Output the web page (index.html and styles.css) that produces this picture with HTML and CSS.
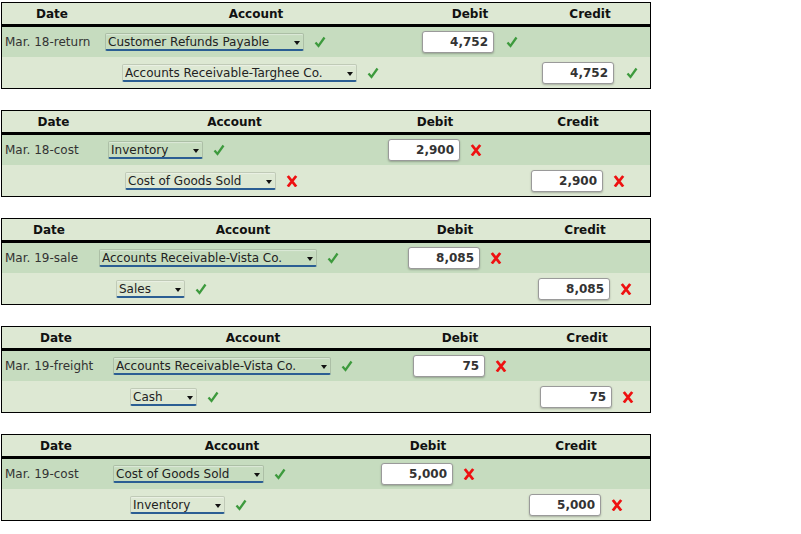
FILE: index.html
```html
<!DOCTYPE html>
<html lang="en">
<head>
  <meta charset="UTF-8">
  <title>Journal entries</title>
  <link rel="stylesheet" href="styles.css">
</head>
<body>

<div class="sheet">

  <!-- Mar. 18 return -->
  <table class="journal j1">
    <colgroup><col class="c-date"><col class="c-acct"><col class="c-dr"><col class="c-cr"></colgroup>
    <thead>
      <tr><th>Date</th><th>Account</th><th>Debit</th><th>Credit</th></tr>
    </thead>
    <tbody>
      <tr class="row-dr">
        <td class="date">Mar. 18-return</td>
        <td class="acct">
          <span class="pick"><select><option>Customer Refunds Payable</option></select></span>
          <svg class="mark ok" viewBox="0 0 12 12"><path d="M1.5 6.5 L4.5 10 L10.5 1.5"/></svg>
        </td>
        <td class="amt">
          <input class="num" type="text" value="4,752">
          <svg class="mark ok" viewBox="0 0 12 12"><path d="M1.5 6.5 L4.5 10 L10.5 1.5"/></svg>
        </td>
        <td class="amt"></td>
      </tr>
      <tr class="row-cr">
        <td class="date"></td>
        <td class="acct indent">
          <span class="pick"><select><option>Accounts Receivable-Targhee Co.</option></select></span>
          <svg class="mark ok" viewBox="0 0 12 12"><path d="M1.5 6.5 L4.5 10 L10.5 1.5"/></svg>
        </td>
        <td class="amt"></td>
        <td class="amt">
          <input class="num" type="text" value="4,752">
          <svg class="mark ok" viewBox="0 0 12 12"><path d="M1.5 6.5 L4.5 10 L10.5 1.5"/></svg>
        </td>
      </tr>
    </tbody>
  </table>

  <!-- Mar. 18 cost -->
  <table class="journal j2">
    <colgroup><col class="c-date"><col class="c-acct"><col class="c-dr"><col class="c-cr"></colgroup>
    <thead>
      <tr><th>Date</th><th>Account</th><th>Debit</th><th>Credit</th></tr>
    </thead>
    <tbody>
      <tr class="row-dr">
        <td class="date">Mar. 18-cost</td>
        <td class="acct">
          <span class="pick"><select><option>Inventory</option></select></span>
          <svg class="mark ok" viewBox="0 0 12 12"><path d="M1.5 6.5 L4.5 10 L10.5 1.5"/></svg>
        </td>
        <td class="amt">
          <input class="num" type="text" value="2,900">
          <svg class="mark bad" viewBox="0 0 12 12"><path d="M1.8 1 L10.2 11.5 M10.2 1 L1.8 11.5"/></svg>
        </td>
        <td class="amt"></td>
      </tr>
      <tr class="row-cr">
        <td class="date"></td>
        <td class="acct indent">
          <span class="pick"><select><option>Cost of Goods Sold</option></select></span>
          <svg class="mark bad" viewBox="0 0 12 12"><path d="M1.8 1 L10.2 11.5 M10.2 1 L1.8 11.5"/></svg>
        </td>
        <td class="amt"></td>
        <td class="amt">
          <input class="num" type="text" value="2,900">
          <svg class="mark bad" viewBox="0 0 12 12"><path d="M1.8 1 L10.2 11.5 M10.2 1 L1.8 11.5"/></svg>
        </td>
      </tr>
    </tbody>
  </table>

  <!-- Mar. 19 sale -->
  <table class="journal j3">
    <colgroup><col class="c-date"><col class="c-acct"><col class="c-dr"><col class="c-cr"></colgroup>
    <thead>
      <tr><th>Date</th><th>Account</th><th>Debit</th><th>Credit</th></tr>
    </thead>
    <tbody>
      <tr class="row-dr">
        <td class="date">Mar. 19-sale</td>
        <td class="acct">
          <span class="pick"><select><option>Accounts Receivable-Vista Co.</option></select></span>
          <svg class="mark ok" viewBox="0 0 12 12"><path d="M1.5 6.5 L4.5 10 L10.5 1.5"/></svg>
        </td>
        <td class="amt">
          <input class="num" type="text" value="8,085">
          <svg class="mark bad" viewBox="0 0 12 12"><path d="M1.8 1 L10.2 11.5 M10.2 1 L1.8 11.5"/></svg>
        </td>
        <td class="amt"></td>
      </tr>
      <tr class="row-cr">
        <td class="date"></td>
        <td class="acct indent">
          <span class="pick"><select><option>Sales</option></select></span>
          <svg class="mark ok" viewBox="0 0 12 12"><path d="M1.5 6.5 L4.5 10 L10.5 1.5"/></svg>
        </td>
        <td class="amt"></td>
        <td class="amt">
          <input class="num" type="text" value="8,085">
          <svg class="mark bad" viewBox="0 0 12 12"><path d="M1.8 1 L10.2 11.5 M10.2 1 L1.8 11.5"/></svg>
        </td>
      </tr>
    </tbody>
  </table>

  <!-- Mar. 19 freight -->
  <table class="journal j4">
    <colgroup><col class="c-date"><col class="c-acct"><col class="c-dr"><col class="c-cr"></colgroup>
    <thead>
      <tr><th>Date</th><th>Account</th><th>Debit</th><th>Credit</th></tr>
    </thead>
    <tbody>
      <tr class="row-dr">
        <td class="date">Mar. 19-freight</td>
        <td class="acct">
          <span class="pick"><select><option>Accounts Receivable-Vista Co.</option></select></span>
          <svg class="mark ok" viewBox="0 0 12 12"><path d="M1.5 6.5 L4.5 10 L10.5 1.5"/></svg>
        </td>
        <td class="amt">
          <input class="num" type="text" value="75">
          <svg class="mark bad" viewBox="0 0 12 12"><path d="M1.8 1 L10.2 11.5 M10.2 1 L1.8 11.5"/></svg>
        </td>
        <td class="amt"></td>
      </tr>
      <tr class="row-cr">
        <td class="date"></td>
        <td class="acct indent">
          <span class="pick"><select><option>Cash</option></select></span>
          <svg class="mark ok" viewBox="0 0 12 12"><path d="M1.5 6.5 L4.5 10 L10.5 1.5"/></svg>
        </td>
        <td class="amt"></td>
        <td class="amt">
          <input class="num" type="text" value="75">
          <svg class="mark bad" viewBox="0 0 12 12"><path d="M1.8 1 L10.2 11.5 M10.2 1 L1.8 11.5"/></svg>
        </td>
      </tr>
    </tbody>
  </table>

  <!-- Mar. 19 cost -->
  <table class="journal j5">
    <colgroup><col class="c-date"><col class="c-acct"><col class="c-dr"><col class="c-cr"></colgroup>
    <thead>
      <tr><th>Date</th><th>Account</th><th>Debit</th><th>Credit</th></tr>
    </thead>
    <tbody>
      <tr class="row-dr">
        <td class="date">Mar. 19-cost</td>
        <td class="acct">
          <span class="pick"><select><option>Cost of Goods Sold</option></select></span>
          <svg class="mark ok" viewBox="0 0 12 12"><path d="M1.5 6.5 L4.5 10 L10.5 1.5"/></svg>
        </td>
        <td class="amt">
          <input class="num" type="text" value="5,000">
          <svg class="mark bad" viewBox="0 0 12 12"><path d="M1.8 1 L10.2 11.5 M10.2 1 L1.8 11.5"/></svg>
        </td>
        <td class="amt"></td>
      </tr>
      <tr class="row-cr">
        <td class="date"></td>
        <td class="acct indent">
          <span class="pick"><select><option>Inventory</option></select></span>
          <svg class="mark ok" viewBox="0 0 12 12"><path d="M1.5 6.5 L4.5 10 L10.5 1.5"/></svg>
        </td>
        <td class="amt"></td>
        <td class="amt">
          <input class="num" type="text" value="5,000">
          <svg class="mark bad" viewBox="0 0 12 12"><path d="M1.8 1 L10.2 11.5 M10.2 1 L1.8 11.5"/></svg>
        </td>
      </tr>
    </tbody>
  </table>

</div>

</body>
</html>
```

FILE: styles.css
```css
body {
  margin: 0;
  background: #fff;
  font-family: "DejaVu Sans", Verdana, sans-serif;
  font-size: 12px;
  color: #222;
}

.sheet {
  padding: 2px 0 0 1px;
}

/* journal table */
.journal {
  width: 650px;
  table-layout: fixed;
  border-collapse: separate;
  border-spacing: 0;
  border: 1px solid #000;
  background: #dde8d3;
  margin-bottom: 21px;
}
.journal th {
  height: 21px;
  padding: 0;
  font-weight: bold;
  font-size: 12px;
  color: #111;
  text-align: center;
  vertical-align: middle;
  border-bottom: 3px solid #000;
}
.journal td {
  padding: 0;
  vertical-align: middle;
  white-space: nowrap;
}
.row-dr td {
  height: 30px;
  background: #c6dcbf;
}
.row-cr td {
  height: 31px;
}

.date {
  padding-left: 3px !important;
  color: #333;
}
.acct {
  padding-left: 3px !important;
}
.acct.indent {
  padding-left: 20px !important;
}
.amt {
  text-align: center;
}

/* column widths per entry */
.j1 .c-date { width: 100px; }
.j1 .c-acct { width: 308px; }
.j1 .c-dr   { width: 120px; }
.j1 .c-cr   { width: 120px; }

.j2 .c-date { width: 103px; }
.j2 .c-acct { width: 259px; }
.j2 .c-dr   { width: 142px; }
.j2 .c-cr   { width: 144px; }

.j3 .c-date { width: 94px; }
.j3 .c-acct { width: 294px; }
.j3 .c-dr   { width: 130px; }
.j3 .c-cr   { width: 130px; }

.j4 .c-date { width: 108px; }
.j4 .c-acct { width: 286px; }
.j4 .c-dr   { width: 128px; }
.j4 .c-cr   { width: 126px; }

.j5 .c-date { width: 108px; }
.j5 .c-acct { width: 244px; }
.j5 .c-dr   { width: 148px; }
.j5 .c-cr   { width: 148px; }

/* account dropdown */
.pick {
  position: relative;
  display: inline-block;
  vertical-align: middle;
}
.pick select {
  appearance: none;
  -webkit-appearance: none;
  font-family: "DejaVu Sans", Verdana, sans-serif;
  font-size: 12px;
  line-height: 14px;
  color: #222;
  background: transparent;
  margin: 0;
  padding: 1px 33px 0 2px;
  border: 1px solid rgba(0, 0, 0, 0.13);
  border-bottom: 2px solid #2b5e93;
  border-radius: 2px;
  box-shadow: inset 0 1px 1px rgba(255, 255, 255, 0.4);
}
.pick::after {
  content: "";
  position: absolute;
  right: 4px;
  top: 8px;
  border-left: 3px solid transparent;
  border-right: 3px solid transparent;
  border-top: 4px solid #111;
  pointer-events: none;
}

/* amount boxes */
.num {
  width: 72px;
  height: 22px;
  box-sizing: border-box;
  margin: 0;
  padding: 0 5px;
  vertical-align: middle;
  text-align: right;
  font-family: "DejaVu Sans", Verdana, sans-serif;
  font-size: 12px;
  font-weight: bold;
  color: #333;
  background: #fff;
  border: 1px solid #9a9a9a;
  border-radius: 3px;
  box-shadow: 0 1px 2px rgba(0, 0, 0, 0.25);
}

/* right / wrong marks */
.mark {
  width: 12px;
  height: 12px;
  vertical-align: middle;
  fill: none;
  margin-left: 6px;
}
.mark.ok path {
  stroke: #3d9a3d;
  stroke-width: 2.3;
}
.mark.bad path {
  stroke: #ee1111;
  stroke-width: 2.8;
}
.amt .mark {
  margin-left: 8px;
}
.amt .mark.bad {
  margin-left: 6px;
}
```
